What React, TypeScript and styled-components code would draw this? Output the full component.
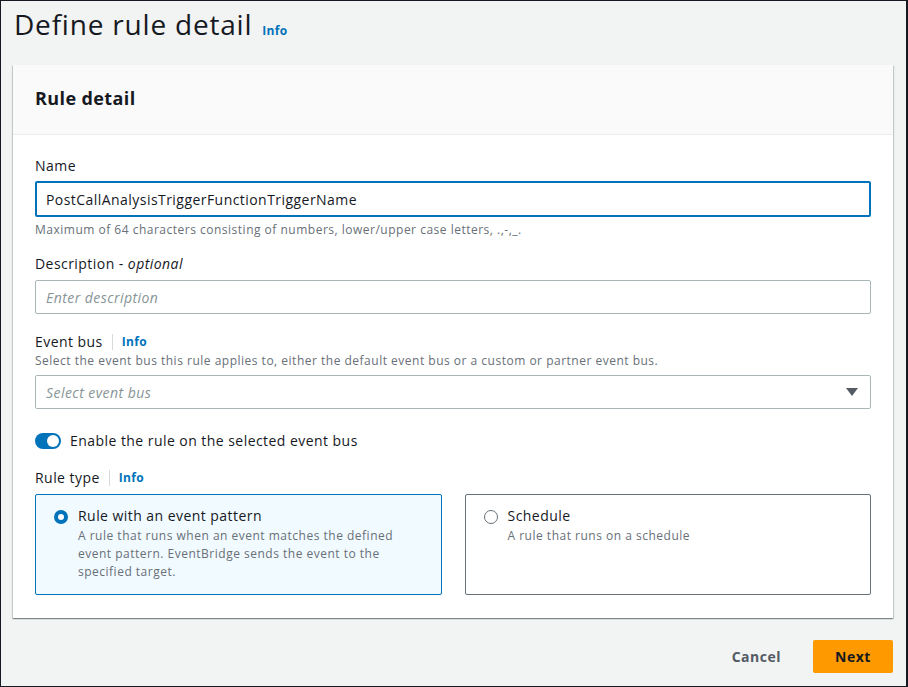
import styled, { createGlobalStyle } from "styled-components";

const GlobalStyle = createGlobalStyle`
  * { box-sizing: border-box; }
  body {
    margin: 0;
    background: #f2f3f3;
    font-family: "Open Sans", "Noto Sans", sans-serif;
    color: #16191f;
    letter-spacing: 0.45px;
  }
`;

const Frame = styled.div`
  width: 908px;
  height: 687px;
  border: 1px solid #16191f;
  border-right-width: 2px;
  background: #f2f3f3;
  padding: 0 12px;
  display: flex;
  flex-direction: column;
`;

const PageHeader = styled.div`
  display: flex;
  align-items: baseline;
  gap: 10px;
  height: 64px;
  padding: 1px 0 0 1px;
`;

const PageTitle = styled.h1`
  margin: 0;
  font-size: 28px;
  font-weight: 400;
  line-height: 44px;
  letter-spacing: 0.8px;
`;

const InfoLink = styled.a`
  font-size: 12px;
  font-weight: 700;
  letter-spacing: 0.3px;
  color: #0073bb;
  text-decoration: none;
`;

const Card = styled.section`
  width: 880px;
  background: #fff;
  box-shadow: 0 1px 1px 0 rgba(0, 28, 36, 0.3), 1px 1px 1px 0 rgba(0, 28, 36, 0.15),
    -1px 1px 1px 0 rgba(0, 28, 36, 0.15);
`;

const CardHeader = styled.div`
  height: 70px;
  display: flex;
  align-items: center;
  padding: 0 22px 4px;
  background: #fafafa;
  border-bottom: 1px solid #eaeded;
`;

const CardTitle = styled.h2`
  margin: 0;
  font-size: 18px;
  font-weight: 700;
  letter-spacing: 0.4px;
`;

const CardBody = styled.div`
  padding: 20px 22px 23px;
  display: flex;
  flex-direction: column;
`;

const Field = styled.div<{ $gap?: number }>`
  display: flex;
  flex-direction: column;
  margin-bottom: ${({ $gap }) => $gap ?? 17}px;
`;

const LabelRow = styled.div`
  display: flex;
  align-items: center;
  font-size: 14px;
  line-height: 22px;
`;

const Label = styled.label`
  font-size: 14px;
  line-height: 22px;
  em { font-style: italic; }
`;

const Divider = styled.span`
  width: 1px;
  height: 16px;
  background: #d5dbdb;
  margin: 0 9px;
`;

const Hint = styled.div<{ $top?: number }>`
  font-size: 12px;
  line-height: 16px;
  letter-spacing: 0.5px;
  color: #687078;
  margin-top: ${({ $top }) => $top ?? 0}px;
`;

const TextInput = styled.input<{ $focused?: boolean }>`
  width: 100%;
  height: ${({ $focused }) => ($focused ? 36 : 34)}px;
  margin-top: ${({ $focused }) => ($focused ? 4 : 5)}px;
  padding: 0 ${({ $focused }) => ($focused ? 9 : 10)}px;
  border: ${({ $focused }) => ($focused ? "2px solid #0073bb" : "1px solid #aab7b8")};
  border-radius: 2px;
  font-family: inherit;
  font-size: 14px;
  letter-spacing: 0.45px;
  color: #16191f;
  background: #fff;
  outline: none;
  &::placeholder {
    color: #879596;
    font-style: italic;
  }
`;

const Select = styled.div`
  height: 34px;
  margin-top: 6px;
  border: 1px solid #aab7b8;
  border-radius: 2px;
  display: flex;
  align-items: center;
  justify-content: space-between;
  padding: 0 12px 0 10px;
  font-size: 14px;
  font-style: italic;
  color: #879596;
`;

const Caret = styled.span`
  width: 0;
  height: 0;
  border-left: 6px solid transparent;
  border-right: 6px solid transparent;
  border-top: 8px solid #545b64;
`;

const ToggleRow = styled.div`
  display: flex;
  align-items: center;
  gap: 9px;
  font-size: 14px;
  line-height: 22px;
  margin: 21px 0 15px;
`;

const Toggle = styled.span`
  width: 26px;
  height: 16px;
  border-radius: 8px;
  background: #0073bb;
  display: flex;
  align-items: center;
  justify-content: flex-end;
  padding: 2px;
  &::after {
    content: "";
    width: 12px;
    height: 12px;
    border-radius: 50%;
    background: #fff;
  }
`;

const Tiles = styled.div`
  display: grid;
  grid-template-columns: 1fr 1fr;
  gap: 23px;
  margin-top: 5px;
`;

const Tile = styled.div<{ $selected?: boolean }>`
  height: 101px;
  padding: 10px 18px;
  border: 1px solid ${({ $selected }) => ($selected ? "#0073bb" : "#687078")};
  background: ${({ $selected }) => ($selected ? "#f1faff" : "#fff")};
  border-radius: 2px;
  display: flex;
  gap: 10px;
`;

const Radio = styled.span<{ $checked?: boolean }>`
  flex: none;
  width: 14px;
  height: 14px;
  margin-top: 5px;
  border-radius: 50%;
  border: ${({ $checked }) => ($checked ? "4px solid #0073bb" : "1px solid #687078")};
  background: #fff;
`;

const TileText = styled.div`
  display: flex;
  flex-direction: column;
  padding-right: 10px;
`;

const TileTitle = styled.div`
  font-size: 14px;
  line-height: 22px;
`;

const TileDesc = styled.div`
  font-size: 12px;
  line-height: 18px;
  letter-spacing: 0.5px;
  color: #687078;
`;

const Footer = styled.div`
  display: flex;
  justify-content: flex-end;
  align-items: center;
  gap: 32px;
  padding: 22px 1px 0 0;
`;

const LinkButton = styled.button`
  border: none;
  background: none;
  font-family: inherit;
  font-size: 14px;
  font-weight: 700;
  letter-spacing: 0.5px;
  color: #545b64;
  padding: 0;
`;

const PrimaryButton = styled.button`
  width: 80px;
  height: 33px;
  border: none;
  border-radius: 2px;
  background: #ff9900;
  font-family: inherit;
  font-size: 14px;
  font-weight: 700;
  letter-spacing: 0.5px;
  color: #16191f;
`;

export default function App() {
  return (
    <>
      <GlobalStyle />
      <Frame>
        <PageHeader>
          <PageTitle>Define rule detail</PageTitle>
          <InfoLink href="#">Info</InfoLink>
        </PageHeader>
        <Card>
          <CardHeader>
            <CardTitle>Rule detail</CardTitle>
          </CardHeader>
          <CardBody>
            <Field $gap={15}>
              <Label>Name</Label>
              <TextInput $focused defaultValue="PostCallAnalysisTriggerFunctionTriggerName" />
              <Hint $top={5}>Maximum of 64 characters consisting of numbers, lower/upper case letters, .,-,_.</Hint>
            </Field>
            <Field>
              <Label>
                Description - <em>optional</em>
              </Label>
              <TextInput placeholder="Enter description" />
            </Field>
            <Field $gap={0}>
              <LabelRow>
                <span>Event bus</span>
                <Divider />
                <InfoLink href="#">Info</InfoLink>
              </LabelRow>
              <Hint>
                Select the event bus this rule applies to, either the default event bus or a custom or partner event bus.
              </Hint>
              <Select>
                <span>Select event bus</span>
                <Caret />
              </Select>
            </Field>
            <ToggleRow>
              <Toggle />
              <span>Enable the rule on the selected event bus</span>
            </ToggleRow>
            <LabelRow>
              <span>Rule type</span>
              <Divider />
              <InfoLink href="#">Info</InfoLink>
            </LabelRow>
            <Tiles>
              <Tile $selected>
                <Radio $checked />
                <TileText>
                  <TileTitle>Rule with an event pattern</TileTitle>
                  <TileDesc>
                    A rule that runs when an event matches the defined event pattern. EventBridge sends the event to the
                    specified target.
                  </TileDesc>
                </TileText>
              </Tile>
              <Tile>
                <Radio />
                <TileText>
                  <TileTitle>Schedule</TileTitle>
                  <TileDesc>A rule that runs on a schedule</TileDesc>
                </TileText>
              </Tile>
            </Tiles>
          </CardBody>
        </Card>
        <Footer>
          <LinkButton>Cancel</LinkButton>
          <PrimaryButton>Next</PrimaryButton>
        </Footer>
      </Frame>
    </>
  );
}
